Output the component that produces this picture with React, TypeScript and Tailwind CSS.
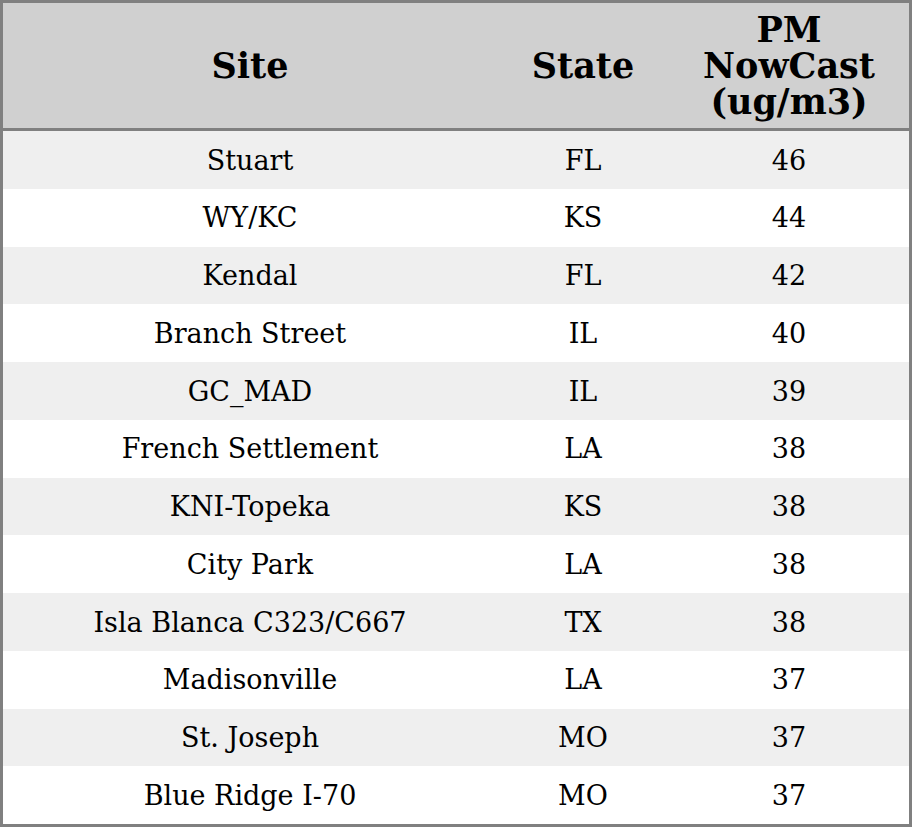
const rows: [string, string, number][] = [
  ['Stuart', 'FL', 46],
  ['WY/KC', 'KS', 44],
  ['Kendal', 'FL', 42],
  ['Branch Street', 'IL', 40],
  ['GC_MAD', 'IL', 39],
  ['French Settlement', 'LA', 38],
  ['KNI-Topeka', 'KS', 38],
  ['City Park', 'LA', 38],
  ['Isla Blanca C323/C667', 'TX', 38],
  ['Madisonville', 'LA', 37],
  ['St. Joseph', 'MO', 37],
  ['Blue Ridge I-70', 'MO', 37],
]

export default function App() {
  return (
    <div className="w-[912px] h-[827px] bg-white font-['DejaVu_Serif',serif] text-black">
      <div className="border-[3px] border-[#808080] h-full flex flex-col">
        <div className="grid grid-cols-[494px_172px_1fr] h-[125px] bg-[#d0d0d0] border-b-[3px] border-[#808080] font-bold text-[35px] leading-[36px] text-center items-center box-content">
          <div>Site</div>
          <div>State</div>
          <div>PM<br />NowCast<br />(ug/m3)</div>
        </div>
        <div className="flex-1 flex flex-col">
          {rows.map(([site, state, pm], i) => (
            <div
              key={site}
              className={`flex-1 grid grid-cols-[494px_172px_1fr] items-center text-center text-[27px] pt-[2px] ${i % 2 === 0 ? 'bg-[#efefef]' : 'bg-white'}`}
            >
              <div>{site}</div>
              <div>{state}</div>
              <div>{pm}</div>
            </div>
          ))}
        </div>
      </div>
    </div>
  )
}
